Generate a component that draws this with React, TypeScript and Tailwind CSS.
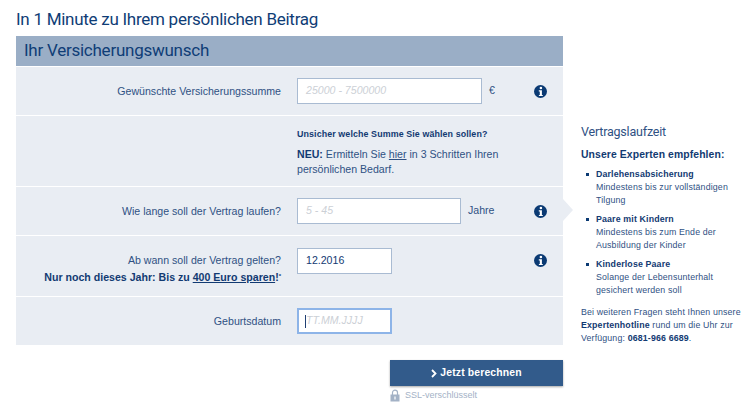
const navy = "text-[#2f5183]";

function InfoIcon() {
  return (
    <svg width="13" height="13" viewBox="0 0 13 13" className="block">
      <circle cx="6.5" cy="6.5" r="6.5" fill="#0b3a73" />
      <circle cx="6.9" cy="3" r="1.3" fill="#fff" />
      <path d="M4.8 5.3h3.1v4.6h.9v1.1H4.9V9.9h.9V6.4h-1z" fill="#fff" />
    </svg>
  );
}

function Row({ className, children }: { className: string; children: React.ReactNode }) {
  return <div className={`flex bg-[#e9edf3] ${className}`}>{children}</div>;
}

function Label({ children }: { children: React.ReactNode }) {
  return <div className={`w-[265px] shrink-0 text-right text-[10.6px] pt-px ${navy}`}>{children}</div>;
}

function Field({ width, value, placeholder, focused }: { width: string; value?: string; placeholder?: string; focused?: boolean }) {
  return (
    <div
      className={`${width} h-[26px] shrink-0 flex items-center bg-white border pl-2 text-[10.6px] ${
        focused ? "border-[#8db4e8] border-2 pl-[7px]" : "border-[#a9bbd2]"
      }`}
    >
      {focused && <span className="w-px h-[13px] bg-[#1f3f73] -ml-px" />}
      {value ? (
        <span className="text-[#123a72]">{value}</span>
      ) : (
        <span className="italic text-[#ccd0d6]">{placeholder}</span>
      )}
    </div>
  );
}

function Advice({ title, lines }: { title: string; lines: string[] }) {
  return (
    <div className="flex">
      <div className="w-[15px] shrink-0 pt-[5px] pl-[5px]">
        <div className="w-[3px] h-[3px] bg-[#0b3a73]" />
      </div>
      <div className={`text-[8.8px] leading-[13px] tracking-[0.15px] whitespace-nowrap ${navy}`}>
        <div className="font-bold text-[#123a72]">{title}</div>
        {lines.map((l) => (
          <div key={l}>{l}</div>
        ))}
      </div>
    </div>
  );
}

export default function App() {
  return (
    <div className="w-[750px] h-[410px] bg-white overflow-hidden font-['Liberation_Sans',sans-serif]">
      <h1 className="pl-4 pt-[9px] h-[36px] font-['Roboto',sans-serif] text-[17px] leading-[21px] tracking-[-0.27px] text-[#0f3d76]">
        In 1 Minute zu Ihrem persönlichen Beitrag
      </h1>
      <div className="flex pl-4">
        <div className="w-[547px] shrink-0">
          <div className="relative flex flex-col gap-px">
            <div className="h-[30px] bg-[#9aaec6] pl-2 flex items-center font-['Roboto',sans-serif] text-[17px] tracking-[-0.25px] text-[#0f3d76]">
              Ihr Versicherungswunsch
            </div>
            <Row className="h-[48px] items-center">
              <Label>Gewünschte Versicherungssumme</Label>
              <div className="w-4 shrink-0" />
              <Field width="w-[185px]" placeholder="25000 - 7500000" />
              <span className={`ml-[7px] w-[45px] text-[10.6px] ${navy}`}>€</span>
              <InfoIcon />
            </Row>
            <Row className="h-[70px]">
              <div className="w-[281px] shrink-0" />
              <div className={`pt-[11px] text-[10.6px] ${navy}`}>
                <div className="text-[8.9px] leading-[14px] font-bold text-[#123a72] tracking-[0.1px] whitespace-nowrap">
                  Unsicher welche Summe Sie wählen sollen?
                </div>
                <div className="mt-[6px] leading-[15px] w-[225px]">
                  <b className="text-[#123a72]">NEU:</b> Ermitteln Sie <u>hier</u> in 3 Schritten Ihren persönlichen Bedarf.
                </div>
              </div>
            </Row>
            <Row className="h-[48px] items-center">
              <Label>Wie lange soll der Vertrag laufen?</Label>
              <div className="w-4 shrink-0" />
              <Field width="w-[164px]" placeholder="5 - 45" />
              <span className={`ml-[7px] w-[66px] text-[10.6px] ${navy}`}>Jahre</span>
              <InfoIcon />
            </Row>
            <Row className="h-[60px] pt-[12px]">
              <div className="w-[265px] shrink-0 text-right text-[10.6px] pt-[4px]">
                <div className={`h-[17px] leading-[17px] ${navy}`}>Ab wann soll der Vertrag gelten?</div>
                <div className="leading-[17px] font-bold text-[#123a72] whitespace-nowrap">
                  Nur noch dieses Jahr: Bis zu <u>400 Euro sparen</u>!<sup className="text-[6px]">*</sup>
                </div>
              </div>
              <div className="w-4 shrink-0" />
              <Field width="w-[95px]" value="12.2016" />
              <div className="w-[142px] shrink-0" />
              <div className="pt-[6px]">
                <InfoIcon />
              </div>
            </Row>
            <Row className="h-[48px] items-center">
              <Label>Geburtsdatum</Label>
              <div className="w-4 shrink-0" />
              <Field width="w-[95px]" placeholder="TT.MM.JJJJ" focused />
            </Row>
            {/* pointer toward the sidebar */}
            <div className="absolute left-full top-[163px] w-0 h-0 border-y-[11px] border-y-transparent border-l-[10px] border-l-[#e9edf3]" />
          </div>
          <div className="pl-[374px] pt-[15px]">
            <button className="w-[173px] h-[26px] bg-[#325b8b] shadow-[0_1px_2px_rgba(0,0,0,0.35)] flex items-center justify-center gap-[3px] text-white text-[10.4px] font-bold tracking-[0.15px]">
              <svg width="6" height="9" viewBox="0 0 6 9">
                <path d="M1 1l3.5 3.5L1 8" fill="none" stroke="#fff" strokeWidth="1.8" />
              </svg>
              Jetzt berechnen
            </button>
            <div className="flex items-center gap-[5px] mt-[3px] text-[9px] text-[#a3b2c6]">
              <svg width="10" height="13" viewBox="0 0 10 13">
                <path d="M2.5 6V3.6a2.5 2.5 0 0 1 5 0V6" fill="none" stroke="#a3b2c6" strokeWidth="1.2" />
                <rect x="0.5" y="5.5" width="9" height="7" fill="#a3b2c6" />
                <rect x="4.4" y="7.5" width="1.2" height="3" fill="#fff" />
              </svg>
              SSL-verschlüsselt
            </div>
          </div>
        </div>
        <div className="pl-[18px] pt-[88px] w-[187px] shrink-0">
          <div className="font-['Roboto',sans-serif] text-[12.5px] leading-[16px] tracking-[-0.2px] text-[#2f5183]">
            Vertragslaufzeit
          </div>
          <div className="mt-[8px] text-[10.4px] leading-[14px] font-bold text-[#123a72] tracking-[0.1px] whitespace-nowrap">
            Unsere Experten empfehlen:
          </div>
          <div className="mt-[6px] flex flex-col gap-[6px]">
            <Advice title="Darlehensabsicherung" lines={["Mindestens bis zur vollständigen", "Tilgung"]} />
            <Advice title="Paare mit Kindern" lines={["Mindestens bis zum Ende der", "Ausbildung der Kinder"]} />
            <Advice title="Kinderlose Paare" lines={["Solange der Lebensunterhalt", "gesichert werden soll"]} />
          </div>
          <div className={`mt-[9px] text-[8.8px] leading-[13px] tracking-[0.15px] whitespace-nowrap ${navy}`}>
            Bei weiteren Fragen steht Ihnen unsere
            <br />
            <b className="text-[#123a72]">Expertenhotline</b> rund um die Uhr zur
            <br />
            Verfügung: <b className="text-[#123a72]">0681-966 6689</b>.
          </div>
        </div>
      </div>
    </div>
  );
}
